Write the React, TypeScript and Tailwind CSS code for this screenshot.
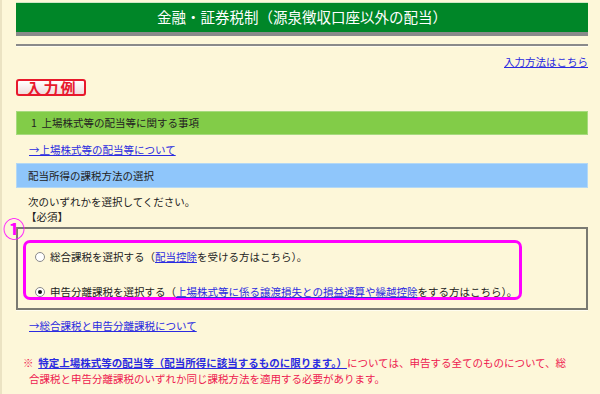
import React from "react";

const Radio = ({ checked }: { checked?: boolean }) => (
  <span className="inline-flex items-center justify-center w-[10px] h-[10px] rounded-full border border-[#8a8a8a] bg-white shrink-0">
    {checked && <span className="w-[4px] h-[4px] rounded-full bg-[#111]" />}
  </span>
);

export default function App() {
  const link = "text-[#2b2be0] underline";
  return (
    <div
      className="w-[600px] h-[394px] bg-[#fdf7d9] relative overflow-hidden text-[#333] border-l-2 border-[#ebe3c3]"
      style={{ fontFamily: '"Noto Sans CJK JP", "Noto Sans", sans-serif' }}
    >
      <div className="pl-[14px] pr-[12px] pt-[2px] flex flex-col">
        {/* header */}
        <div className="border-t border-[#cfe6c6]">
          <div className="h-[29px] bg-[#008628] text-white text-[14.5px] flex items-center justify-center leading-none">
            金融・証券税制（源泉徴収口座以外の配当）
          </div>
          <div className="h-[4px] bg-[#8a8a8a]" />
        </div>
        <div className="mt-[8px] h-[2px] bg-[#8a8a8a]" />
        <div className="h-[1px] bg-[#fffdf0]" />

        <div className="mt-[8px] flex justify-end text-[10.5px] leading-[14px]">
          <span className={link}>入力方法はこちら</span>
        </div>

        <div className="mt-[10px] flex">
          <div className="w-[70px] h-[17px] rounded-[3px] border-2 border-[#e8192c] bg-gradient-to-b from-white to-[#efdcdc] flex items-center justify-center text-[#e8192c] font-bold text-[15px] leading-none tracking-[2px] pl-[2px]">
            入力例
          </div>
        </div>

        <div className="mt-[15px] h-[24px] bg-[#82cc48] border border-[#a6da7e] flex items-center pl-[14px] text-[10.5px] text-[#222]">
          1&nbsp;&nbsp;上場株式等の配当等に関する事項
        </div>

        <div className="mt-[8px] pl-[13px] text-[10.5px] leading-[14px]">
          <span className={link}>→上場株式等の配当等について</span>
        </div>

        <div className="mt-[6px] h-[25px] bg-[#8fc6fb] border border-[#b3d8f5] flex items-center pl-[11px] text-[10.5px] text-[#222]">
          配当所得の課税方法の選択
        </div>

        <div className="mt-[6px] pl-[12px] text-[10.5px] leading-[15px] text-[#222]">
          <div>次のいずれかを選択してください。</div>
          <div className="-ml-[2px]">【必須】</div>
        </div>

        {/* selection box */}
        <div className="relative mt-[3px] border-2 border-[#7a7a72] pt-[11px] pb-[8px] pl-[5px]">
          <span className="absolute left-[-15px] top-[-13px] text-[#ff00ff] text-[22px] font-bold leading-none">
            ①
          </span>
          <div className="w-[499px] h-[60px] border-[3px] border-[#ff00ff] rounded-[7px] flex flex-col pl-[9px] text-[10.5px] text-[#222] whitespace-nowrap">
            <div className="mt-[7px] flex items-center gap-[5px] leading-[14px]">
              <Radio />
              <span>
                総合課税を選択する（<span className={link}>配当控除</span>を受ける方はこちら）。
              </span>
            </div>
            <div className="mt-[21px] flex items-center gap-[5px] leading-[14px]">
              <Radio checked />
              <span>
                申告分離課税を選択する（
                <span className={link}>上場株式等に係る譲渡損失との損益通算や繰越控除</span>
                をする方はこちら）。
              </span>
            </div>
          </div>
        </div>
        <div className="h-[1px] bg-[#fffdf0]" />

        <div className="mt-[8px] pl-[13px] text-[10.5px] leading-[14px]">
          <span className={link}>→総合課税と申告分離課税について</span>
        </div>

        <div className="mt-[22px] pl-[13px] text-[10.5px] leading-[16px] text-[#ee2050] whitespace-nowrap">
          <div className="-ml-[6px]">
            ※&nbsp;&nbsp;
            <span className="text-[#2b2be0] underline font-bold">
              特定上場株式等の配当等（配当所得に該当するものに限ります。）
            </span>
            については、申告する全てのものについて、総
          </div>
          <div>合課税と申告分離課税のいずれか同じ課税方法を適用する必要があります。</div>
        </div>
      </div>
    </div>
  );
}
